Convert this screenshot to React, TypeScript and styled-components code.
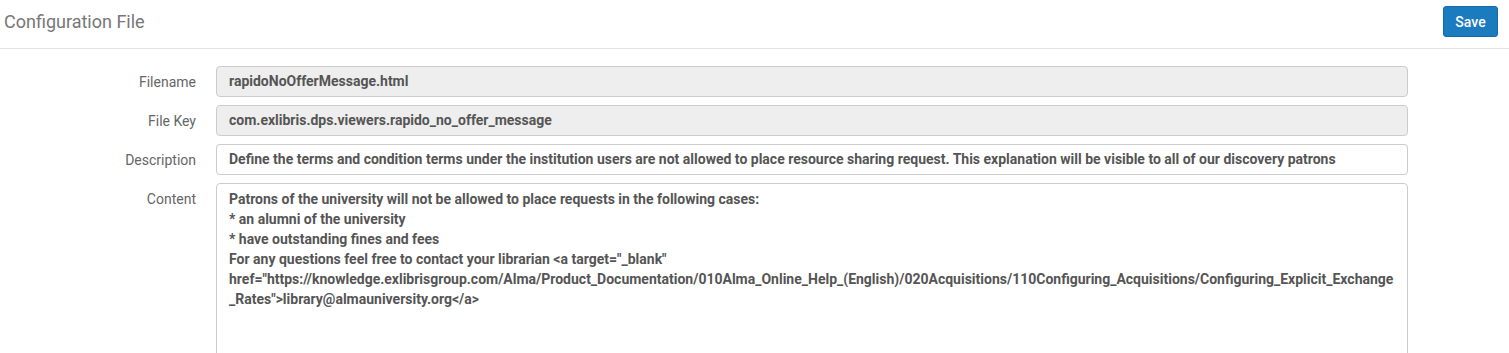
import React from 'react';
import styled, { createGlobalStyle } from 'styled-components';

const GlobalStyle = createGlobalStyle`
  body {
    margin: 0;
    font-family: Roboto, "Liberation Sans", Arial, sans-serif;
    background: #fff;
    overflow: hidden;
  }
`;

const Page = styled.div`
  width: 1509px;
  height: 353px;
  overflow: hidden;
`;

const Header = styled.div`
  display: flex;
  align-items: center;
  justify-content: space-between;
  height: 48px;
  padding: 0 11px 0 4px;
  border-bottom: 1px solid #e3e3e3;
`;

const Title = styled.h1`
  margin: 0 0 6px;
  font-size: 18px;
  font-weight: 400;
  color: #777;
`;

const SaveButton = styled.button`
  height: 31px;
  width: 55px;
  margin-bottom: 5px;
  border: 1px solid #156ba8;
  border-radius: 3px;
  background: #1a7bbf;
  color: #fff;
  font-family: inherit;
  font-size: 14px;
  font-weight: 500;
`;

const Form = styled.div`
  display: flex;
  flex-direction: column;
  gap: 8px;
  padding: 17px 101px 0 0;
`;

const Row = styled.div`
  display: grid;
  grid-template-columns: 196px 1fr;
  column-gap: 20px;
  align-items: start;
`;

const Label = styled.label`
  padding-top: 2px;
  text-align: right;
  font-size: 14px;
  color: #666;
  line-height: 29px;
`;

const Field = styled.div<{ $readOnly?: boolean; $tall?: boolean }>`
  box-sizing: border-box;
  min-height: ${(p) => (p.$tall ? '200px' : '31px')};
  padding: ${(p) => (p.$tall ? '5px 12px' : '0 12px')};
  line-height: ${(p) => (p.$tall ? '20px' : '29px')};
  border: 1px solid #ccc;
  border-radius: 4px;
  background: ${(p) => (p.$readOnly ? '#eee' : '#fff')};
  color: #555;
  font-size: 14px;
  font-weight: 700;
  white-space: ${(p) => (p.$tall ? 'pre-wrap' : 'nowrap')};
  word-break: ${(p) => (p.$tall ? 'break-all' : 'normal')};
  overflow: hidden;
`;

const content = `Patrons of the university will not be allowed to place requests in the following cases:
* an alumni of the university
* have outstanding fines and fees
For any questions feel free to contact your librarian <a target="_blank"
href="https://knowledge.exlibrisgroup.com/Alma/Product_Documentation/010Alma_Online_Help_(English)/020Acquisitions/110Configuring_Acquisitions/Configuring_Explicit_Exchange
_Rates">library@almauniversity.org</a>`;

export default function App() {
  return (
    <Page>
      <GlobalStyle />
      <Header>
        <Title>Configuration File</Title>
        <SaveButton>Save</SaveButton>
      </Header>
      <Form>
        <Row>
          <Label>Filename</Label>
          <Field $readOnly>rapidoNoOfferMessage.html</Field>
        </Row>
        <Row>
          <Label>File Key</Label>
          <Field $readOnly>com.exlibris.dps.viewers.rapido_no_offer_message</Field>
        </Row>
        <Row>
          <Label>Description</Label>
          <Field>
            Define the terms and condition terms under the institution users are not allowed to place resource sharing request. This explanation will be visible to all of our discovery patrons
          </Field>
        </Row>
        <Row>
          <Label>Content</Label>
          <Field $tall>{content}</Field>
        </Row>
      </Form>
    </Page>
  );
}
